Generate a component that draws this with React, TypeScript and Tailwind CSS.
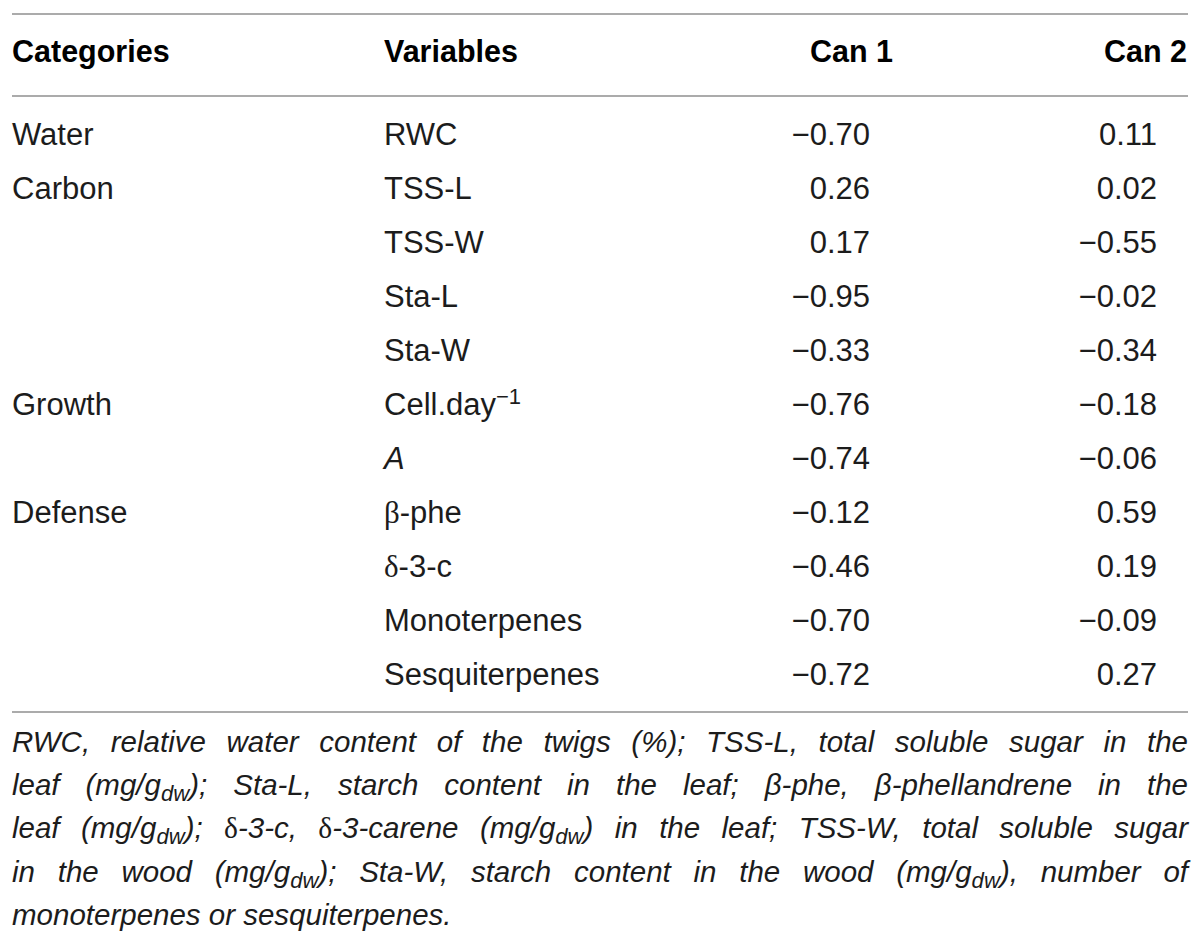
import React from "react";

type Row = {
  category?: string;
  variable: React.ReactNode;
  can1: string;
  can2: string;
};

const greek = "font-['Liberation_Serif',serif]";

const rows: Row[] = [
  { category: "Water", variable: "RWC", can1: "−0.70", can2: "0.11" },
  { category: "Carbon", variable: "TSS-L", can1: "0.26", can2: "0.02" },
  { variable: "TSS-W", can1: "0.17", can2: "−0.55" },
  { variable: "Sta-L", can1: "−0.95", can2: "−0.02" },
  { variable: "Sta-W", can1: "−0.33", can2: "−0.34" },
  {
    category: "Growth",
    variable: (
      <>
        Cell.day<sup className="text-[22px]">−1</sup>
      </>
    ),
    can1: "−0.76",
    can2: "−0.18",
  },
  { variable: <span className="italic">A</span>, can1: "−0.74", can2: "−0.06" },
  {
    category: "Defense",
    variable: (
      <>
        <span className={greek}>β</span>-phe
      </>
    ),
    can1: "−0.12",
    can2: "0.59",
  },
  {
    variable: (
      <>
        <span className={greek}>δ</span>-3-c
      </>
    ),
    can1: "−0.46",
    can2: "0.19",
  },
  { variable: "Monoterpenes", can1: "−0.70", can2: "−0.09" },
  { variable: "Sesquiterpenes", can1: "−0.72", can2: "0.27" },
];

const Gdw = () => (
  <>
    g<sub>dw</sub>
  </>
);

const Rule = () => <div className="h-[2px] bg-[#ababab]" />;

export default function App() {
  const cols = "grid grid-cols-[372px_329px_180px_294px]";

  return (
    <div className="min-h-screen bg-white text-[#1c1c1c] font-['Liberation_Sans',Arial,sans-serif]">
      <div className="px-[12px] pt-[13px]">
        <Rule />

        {/* header */}
        <div className={`${cols} h-[80px] pb-[6px] items-center text-[30.5px] font-bold text-black`}>
          <div>Categories</div>
          <div>Variables</div>
          <div className="text-right">Can 1</div>
          <div className="text-right">Can 2</div>
        </div>
        <Rule />

        {/* body */}
        <div className="pt-[11px] pb-[9px]">
          {rows.map((r, i) => (
            <div key={i} className={`${cols} h-[54px] items-center text-[31px]`}>
              <div>{r.category ?? ""}</div>
              <div>{r.variable}</div>
              <div className="text-right pr-[23px]">{r.can1}</div>
              <div className="text-right pr-[30px]">{r.can2}</div>
            </div>
          ))}
        </div>
        <Rule />

        {/* footnote */}
        <div className="mt-[7px] text-[29.5px] leading-[43px] italic">
          <div className="text-justify [text-align-last:justify]">
            RWC, relative water content of the twigs (%); TSS-L, total soluble sugar in the
          </div>
          <div className="text-justify [text-align-last:justify]">
            leaf (mg/<Gdw />); Sta-L, starch content in the leaf; β-phe, β-phellandrene in the
          </div>
          <div className="text-justify [text-align-last:justify]">
            leaf (mg/<Gdw />); <span className={`not-italic ${greek}`}>δ</span>-3-c,{" "}
            <span className={`not-italic ${greek}`}>δ</span>-3-carene (mg/<Gdw />) in the leaf; TSS-W, total soluble sugar
          </div>
          <div className="text-justify [text-align-last:justify]">
            in the wood (mg/<Gdw />); Sta-W, starch content in the wood (mg/<Gdw />), number of
          </div>
          <div>monoterpenes or sesquiterpenes.</div>
        </div>
      </div>
    </div>
  );
}
